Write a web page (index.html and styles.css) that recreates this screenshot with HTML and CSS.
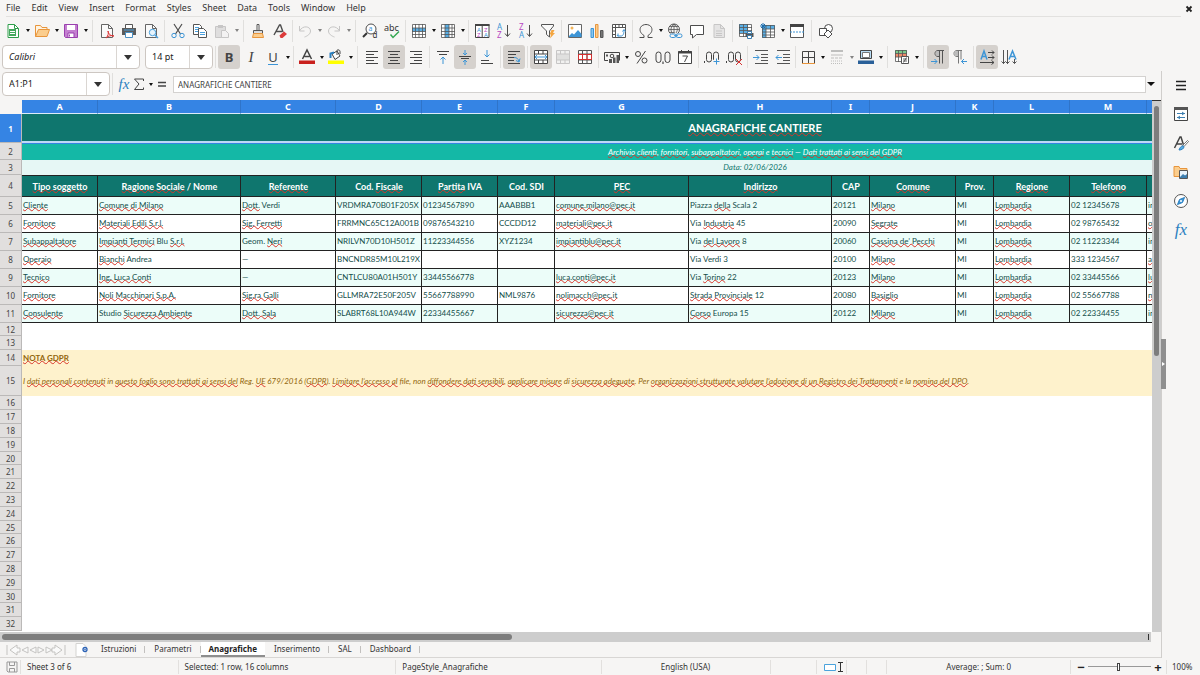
FILE: index.html
```html
<!DOCTYPE html>
<html lang="it">
<head>
<meta charset="utf-8">
<title>Anagrafiche cantiere</title>
<link rel="stylesheet" href="styles.css">
</head>
<body>
<div class="app">
<header class="menubar">
  <nav class="menus">
    <button>File</button><button>Edit</button><button>View</button><button>Insert</button><button>Format</button><button>Styles</button><button>Sheet</button><button>Data</button><button>Tools</button><button>Window</button><button>Help</button>
  </nav>
  <button class="close" aria-label="Close"><svg viewBox="0 0 8 8"><path d="M1.500 1.500l5 5M6.500 1.500l-5 5" stroke="#222" stroke-width="1.800"/></svg></button>
</header>

<div class="toolbar" role="toolbar" aria-label="Standard">
  <button class="tb" aria-label="New"><svg viewBox="0 0 16 16"><path d="M3 1.500h6.500l4 4v9H3z" fill="#fff" stroke="#2e9e4b"/><path d="M9.500 1.500v4h4" stroke="#2e9e4b"/><path d="M4 6h7v7H4z" fill="#43a85c"/><path d="M5 8.500h5M5 10.500h5" stroke="#fff"/></svg></button><button class="arr" aria-label="New options"></button>
  <button class="tb" aria-label="Open"><svg viewBox="0 0 16 16"><path d="M1.500 13.500v-11h5l1.500 2h5v2" fill="#fff3e0" stroke="#e8953c"/><path d="M1.500 13.500l3-7h11l-2.500 7z" fill="#fbcd8d" stroke="#e8953c"/></svg></button><button class="arr" aria-label="Open options"></button>
  <button class="tb" aria-label="Save"><svg viewBox="0 0 16 16"><path d="M1.500 1.500h13v13h-12l-1-1z" fill="#c47fd0" stroke="#9a3fae"/><path d="M4 2h8v5H4z" fill="#fff"/><path d="M5 10h6v4.500H5z" fill="#fff" stroke="#9a3fae"/><path d="M6.500 11.500v2" stroke="#9a3fae"/></svg></button><button class="arr" aria-label="Save options"></button>
  <span class="sep wide"></span>
  <button class="tb" aria-label="Export as PDF"><svg viewBox="0 0 16 16"><path d="M2.500 1.500h7l4 4v9h-11z" fill="#fafafa" stroke="#666"/><path d="M9.500 1.500v4h4" stroke="#666"/><path d="M7 15c2-2 3-5 2-7 0 3 3 5 6 5-3-1-6 0-8 2z" fill="none" stroke="#d33"/></svg></button>
  <button class="tb" aria-label="Print"><svg viewBox="0 0 16 16"><path d="M4.500 5V1.500h7V5" fill="#fff" stroke="#555"/><path d="M1 5h14v7H1z" fill="#5c5c5c"/><path d="M3 7h10" stroke="#4aa0dd"/><path d="M4.500 9.500h7v5h-7z" fill="#fff" stroke="#4a90c4"/></svg></button>
  <button class="tb" aria-label="Print Preview"><svg viewBox="0 0 16 16"><path d="M2.500 1.500h7l4 4v9h-11z" fill="#fafafa" stroke="#666"/><path d="M9.500 1.500v4h4" stroke="#666"/><circle cx="9.500" cy="9.500" r="3.200" fill="#e7f4fd" stroke="#4aa0dd"/><path d="M12 12l3 3" stroke="#4aa0dd" stroke-width="1.500"/></svg></button>
  <span class="sep"></span>
  <button class="tb" aria-label="Cut"><svg viewBox="0 0 16 16"><path d="M4 1l6.500 10M12 1L5.500 11" stroke="#4d4d4d" stroke-width="1.200"/><circle cx="4" cy="12.500" r="2.200" stroke="#3d95d6"/><circle cx="12" cy="12.500" r="2.200" stroke="#3d95d6"/></svg></button>
  <button class="tb" aria-label="Copy"><svg viewBox="0 0 16 16"><path d="M1.500 1.500h6l2 2v8h-8z" fill="#fff" stroke="#555"/><path d="M3 4.500h4M3 6.500h3M3 8.500h3" stroke="#4aa0dd"/><path d="M6.500 5.500h5l3 3v6h-8z" fill="#fff" stroke="#555"/><path d="M8 9.500h5M8 11.500h5" stroke="#4aa0dd"/></svg></button>
  <button class="tb off" aria-label="Paste"><svg viewBox="0 0 16 16"><path d="M1.500 3.500h10v11h-10z" fill="#c9c9c9" stroke="#999"/><path d="M4 2h5v3H4z" fill="#999"/><path d="M7.500 7.500h4l3 3v4h-7z" fill="#f1f1f1" stroke="#999"/></svg></button><button class="arr off" aria-label="Paste options"></button>
  <span class="sep wide"></span>
  <button class="tb" aria-label="Clone Formatting"><svg viewBox="0 0 16 16"><path d="M7 1.500h2v6H7z" fill="#fff" stroke="#555"/><path d="M3.500 7.500h9v3h-9z" fill="#ddd" stroke="#555"/><path d="M3.500 10.500h9l1 4h-11z" fill="#fbcd8d" stroke="#e8953c"/></svg></button>
  <button class="tb" aria-label="Clear Formatting"><svg viewBox="0 0 16 16"><path d="M2 12L7.500 2h1L11 9M4 8.500h6" stroke="#4d4d4d" stroke-width="1.400"/><path d="M7.500 12.500l4.500-4 3 2.500-4.500 4h-2z" fill="#dd3b3b"/></svg></button>
  <span class="sep tight"></span>
  <button class="tb off" aria-label="Undo"><svg viewBox="0 0 16 16"><path d="M2.500 3v5h5M2.500 8c3-6 11-5 11 0 0 3-3 5-6 6" stroke="#999"/></svg></button><button class="arr off" aria-label="Undo history"></button>
  <button class="tb off" aria-label="Redo"><svg viewBox="0 0 16 16"><path d="M13.500 3v5h-5M13.500 8c-3-6-11-5-11 0 0 3 3 5 6 6" stroke="#999"/></svg></button><button class="arr off" aria-label="Redo history"></button>
  <span class="sep wide"></span>
  <button class="tb" aria-label="Find and Replace"><svg viewBox="0 0 16 16"><circle cx="9" cy="6" r="5" fill="#fff" stroke="#4d4d4d"/><path d="M5 10l-4 4" stroke="#333" stroke-width="2"/><text x="6.500" y="8" font-size="7" fill="#3d95d6">a</text><text x="10.500" y="15" font-size="8" fill="#333">d</text></svg></button>
  <button class="tb" aria-label="Spelling"><svg viewBox="0 0 16 16"><text x="0" y="7.500" font-size="9" fill="#333">abc</text><path d="M6.500 11.500l2.500 3 6-6" stroke="#35a853" stroke-width="1.500"/></svg></button>
  <span class="sep"></span>
  <button class="tb" aria-label="Row"><svg viewBox="0 0 16 16"><path d="M1.500 1.500h13v13h-13z" fill="#fff"/><path d="M1 5h14v3.500H1z" fill="#59aee5"/><path d="M1.500 1.500h13v13h-13zM4.500 1v14M8 1v14M11.500 1v14M1 5h14M1 8.500h14M1 11.500h14" stroke="#555" stroke-width=".8"/></svg></button><button class="arr" aria-label="Row options"></button>
  <button class="tb" aria-label="Column"><svg viewBox="0 0 16 16"><path d="M1.500 1.500h13v13h-13z" fill="#fff"/><path d="M5 1h4v14H5z" fill="#59aee5"/><path d="M1.500 1.500h13v13h-13zM5 1v14M9 1v14M12 1v14M1 5h14M1 8.500h14M1 11.500h14" stroke="#555" stroke-width=".8"/></svg></button><button class="arr" aria-label="Column options"></button>
  <span class="sep"></span>
  <button class="tb" aria-label="Sort"><svg viewBox="0 0 16 16"><path d="M1.500 1.500h13.500v13h-13.500zM8.200 3v12" fill="#fff" stroke="#444"/><path d="M1 1h14.500v2H1z" fill="#444"/><text x="3" y="8.500" font-size="6" fill="#3d95d6">A</text><text x="3" y="14" font-size="6" fill="#b847c2">Z</text><text x="10" y="8.500" font-size="6" fill="#b847c2">Z</text><text x="10" y="14" font-size="6" fill="#3d95d6">A</text></svg></button>
  <button class="tb" aria-label="Sort Ascending"><svg viewBox="0 0 16 16"><text x="1" y="7" font-size="8" fill="#3d95d6">A</text><text x="1" y="15" font-size="8" fill="#b847c2">Z</text><path d="M11.500 2v11M9 10.500l2.500 3 2.500-3" stroke="#4d4d4d"/></svg></button>
  <button class="tb" aria-label="Sort Descending"><svg viewBox="0 0 16 16"><text x="1" y="7" font-size="8" fill="#b847c2">Z</text><text x="1" y="15" font-size="8" fill="#3d95d6">A</text><path d="M11.500 2v11M9 10.500l2.500 3 2.500-3" stroke="#4d4d4d"/></svg></button>
  <button class="tb" aria-label="AutoFilter"><svg viewBox="0 0 16 16"><path d="M1.500 1.500h12v1.500L9.500 8v6l-3-2.500V8L1.500 3z" fill="#fafafa" stroke="#555"/><path d="M11.500 7h3l-1.500 3h2l-5 5.500 1-4h-1.500z" fill="#f4a640"/></svg></button>
  <span class="sep"></span>
  <button class="tb" aria-label="Insert Image"><svg viewBox="0 0 16 16"><path d="M1.500 1.500h13v13h-13z" fill="#fff" stroke="#666"/><circle cx="5" cy="5" r="1.500" fill="#f2b45a"/><path d="M2 13l3-3 2 1.500L11 7l3.500 4v3H2z" fill="#3d95d6"/></svg></button>
  <button class="tb" aria-label="Insert Chart"><svg viewBox="0 0 16 16"><path d="M2 5.500h2.500v9H2z" fill="#8ac6ee" stroke="#3d95d6"/><path d="M6.500 1.500H9v13H6.500z" fill="#fbcd8d" stroke="#e8953c"/><path d="M11.500 7.500H14v7h-2.500z" fill="#777" stroke="#555"/></svg></button>
  <button class="tb" aria-label="Pivot Table"><svg viewBox="0 0 16 16"><path d="M1.500 1.500h13v13h-13zM1 4.500h14M4.500 1v14M8 1v3M11.500 1v3M1 8h3M1 11.500h3" fill="#fff" stroke="#555"/><path d="M7 10.500V13h3c2 0 3-2 3-6M11.500 8.500L13 6.500l1.500 2M6 12l1 1.500" stroke="#3d95d6"/></svg></button>
  <span class="sep"></span>
  <button class="tb" aria-label="Special Character"><svg viewBox="0 0 16 16"><path d="M1.500 14.500h4.500v-2C2 10 1.500 7 2.500 4.500c2-4 9-4 11 0 1 2.500.5 5.500-3.500 8v2h4.500" stroke="#4d4d4d"/></svg></button><button class="arr" aria-label="Character options"></button>
  <button class="tb" aria-label="Hyperlink"><svg viewBox="0 0 16 16"><circle cx="7" cy="6.500" r="5.500" stroke="#555"/><path d="M7 1v11M1.500 6.500h11M2.500 3.500h9M2.500 9.500h5M7 1c-4 3-4 8 0 11M7 1c4 3 4 6 2 9" stroke="#555" stroke-width=".8"/><path d="M2.500 10.500h12v5h-12z" fill="#f6f5f4"/><rect x="3" y="11" width="6" height="3.500" rx="1.700" stroke="#3d95d6"/><rect x="9" y="11" width="6" height="3.500" rx="1.700" stroke="#3d95d6"/><path d="M7 12.700h4" stroke="#3d95d6"/></svg></button>
  <button class="tb" aria-label="Comment"><svg viewBox="0 0 16 16"><path d="M1.500 2.500h13v9h-7l-4 3.500v-3.500h-2z" fill="#fff" stroke="#4d4d4d"/></svg></button>
  <button class="tb off" aria-label="Headers and Footers"><svg viewBox="0 0 16 16"><path d="M3 1.500h6.500l4 4v9H3z" fill="#d5d5d5" stroke="#999"/><path d="M9.500 1.500v4h4M5 8h6M5 10.500h6M5 12.500h6" stroke="#999"/></svg></button>
  <span class="sep"></span>
  <button class="tb" aria-label="Print Area"><svg viewBox="0 0 16 16"><path d="M1.500 1.500h12v12h-12z" fill="#fff"/><path d="M1 1h9v9H1z" fill="#59aee5"/><path d="M1.500 1.500h12v12h-12zM5.500 1v13M9.500 1v13M1 4.500h13M1 7.500h13M1 10.500h13" stroke="#555" stroke-width=".8"/><path d="M7.500 10h8v4h-8z" fill="#555"/><path d="M9.500 8.500h4v2h-4zM9.500 12.500h4v3h-4z" fill="#fff" stroke="#3d7fb0"/></svg></button>
  <button class="tb" aria-label="Freeze Rows and Columns"><svg viewBox="0 0 16 16"><path d="M2.500 2.500h12v12h-12z" fill="#fff"/><path d="M2 2h13v4H2zM2 2h4v13H2z" fill="#59aee5"/><path d="M2.500 2.500h12v12h-12zM6 2v13M10.500 2v13M2 6h13M2 9h13M2 12h13" stroke="#555" stroke-width=".8"/><path d="M3 0v6M0 3h6M1 1l4 4M5 1L1 5" stroke="#1c6fb0"/></svg></button><button class="arr" aria-label="Freeze options"></button>
  <button class="tb" aria-label="Split Window"><svg viewBox="0 0 16 16"><path d="M1.500 1.500h13v13h-13z" fill="#fff" stroke="#555"/><path d="M1 1h14v3H1z" fill="#444"/><path d="M1 9h14" stroke="#3d95d6" stroke-dasharray="2 1"/></svg></button>
  <span class="sep wide"></span>
  <button class="tb" aria-label="Show Draw Functions"><svg viewBox="0 0 16 16"><circle cx="10.500" cy="5.500" r="4" fill="#fff" stroke="#4d4d4d"/><path d="M1.500 5.500h7v7h-7z" fill="#fff" stroke="#4d4d4d"/><path d="M10 7l4 4-4 4-4-4z" fill="#fff" stroke="#4d4d4d"/></svg></button>
</div>

<div class="toolbar format" role="toolbar" aria-label="Formatting">
  <div class="combo font-name"><input type="text" aria-label="Font name" value="Calibri"><button aria-label="Font list"></button></div>
  <div class="combo font-size"><input type="text" aria-label="Font size" value="14 pt"><button aria-label="Size list"></button></div>
  <span class="sep"></span>
  <button class="tb on" aria-label="Bold" aria-pressed="true"><b class="glyph">B</b></button>
  <button class="tb" aria-label="Italic"><i class="glyph serif">I</i></button>
  <button class="tb" aria-label="Underline"><span class="glyph under">U</span></button><button class="arr" aria-label="Underline options"></button>
  <span class="sep"></span>
  <button class="tb" aria-label="Font Color"><svg viewBox="0 0 16 16"><path d="M3.500 10L8 1l4.500 9M5.500 7.500h5" stroke="#444" stroke-width="1.500"/><path d="M0 11.500h16V15H0z" fill="#c9211e"/></svg></button><button class="arr" aria-label="Font color options"></button>
  <button class="tb" aria-label="Background Color"><svg viewBox="0 0 16 16"><path d="M4 5l5-3 3 5-5 3.500z" fill="#fff" stroke="#444"/><path d="M9 6V1.500c0-1 3-1 3 1L12 5" stroke="#444"/><path d="M2.500 9V4.500L6 3.500" stroke="#2a7fc0" stroke-width="2"/><path d="M0 11.500h16V15H0z" fill="#ff0"/></svg></button><button class="arr" aria-label="Background options"></button>
  <span class="sep wide"></span>
  <button class="tb" aria-label="Align Left"><svg viewBox="0 0 16 16"><path d="M2 2.500h12M2 5.500h8M2 8.500h12M2 11.500h8M2 14.500h12" stroke="#444"/></svg></button>
  <button class="tb on" aria-label="Center Horizontally" aria-pressed="true"><svg viewBox="0 0 16 16"><path d="M2 2.500h12M4 5.500h8M2 8.500h12M4 11.500h8M2 14.500h12" stroke="#444"/></svg></button>
  <button class="tb" aria-label="Align Right"><svg viewBox="0 0 16 16"><path d="M2 2.500h12M6 5.500h8M2 8.500h12M6 11.500h8M2 14.500h12" stroke="#444"/></svg></button>
  <span class="sep"></span>
  <button class="tb" aria-label="Align Top"><svg viewBox="0 0 16 16"><path d="M2 2.500h12M4 5.500h8" stroke="#444"/><path d="M8 15V8M5.500 10.500L8 8l2.500 2.500" stroke="#3d95d6"/></svg></button>
  <button class="tb on" aria-label="Center Vertically" aria-pressed="true"><svg viewBox="0 0 16 16"><path d="M2 7.500h12M4 9.500h8" stroke="#444"/><path d="M8 1v5M6 4l2 2 2-2M8 16v-5M6 13l2-2 2 2" stroke="#3d95d6"/></svg></button>
  <button class="tb" aria-label="Align Bottom"><svg viewBox="0 0 16 16"><path d="M2 11.500h8M2 14.500h12" stroke="#444"/><path d="M8 1v7M5.500 5.500L8 8l2.500-2.500" stroke="#3d95d6"/></svg></button>
  <span class="sep"></span>
  <button class="tb on" aria-label="Wrap Text" aria-pressed="true"><svg viewBox="0 0 16 16"><path d="M2 2.500h12M2 5.500h8M2 8.500h6M2 11.500h6M2 14.500h12" stroke="#444"/><path d="M8 8.500c3 0 4 1 5 4M10 11.500l3 1.500 1-3.500" stroke="#3d95d6"/></svg></button>
  <span class="sep"></span>
  <button class="tb on" aria-label="Merge and Center Cells" aria-pressed="true"><svg viewBox="0 0 16 16"><path d="M1.500 1.500h13v13h-13zM5.500 1v4M10 1v4M5.500 11v4M10 11v4M1 5h14M1 11h14" fill="#fff" stroke="#444"/><path d="M2 8h12M4 6L2 8l2 2M12 6l2 2-2 2" stroke="#3d95d6"/></svg></button>
  <button class="tb off" aria-label="Merge Cells"><svg viewBox="0 0 16 16"><path d="M1.500 1.500h13v13h-13z" fill="#eee"/><path d="M1 5h14v6H1z" fill="#ccc"/><path d="M1.500 1.500h13v13h-13zM5.500 1v4M10 1v4M5.500 11v4M10 11v4M1 5h14M1 11h14" stroke="#999"/></svg></button>
  <button class="tb" aria-label="Unmerge Cells"><svg viewBox="0 0 16 16"><path d="M1.500 1.500h13v13h-13zM5.500 1v14M10 1v14M1 5h14M1 11h14" fill="#fff" stroke="#555"/><path d="M1.500 5.500h13v5h-13zM5.500 5v6M10 5v6" stroke="#d63030"/></svg></button>
  <span class="sep"></span>
  <button class="tb" aria-label="Format as Currency"><svg viewBox="0 0 16 16"><path d="M.5 3.500h15v8M.5 3.500v8H4" stroke="#444"/><circle cx="8" cy="7" r="1.800" stroke="#444"/><path d="M5 10h3v4H5zM9 8.500h2.500V14H9zM12.500 6H15v8h-2.500z" fill="#555"/><path d="M2 5.500h2v2H2z" fill="#555"/></svg></button><button class="arr" aria-label="Currency options"></button>
  <button class="tb" aria-label="Format as Percent"><svg viewBox="0 0 16 16"><circle cx="5" cy="5" r="2.500" stroke="#444"/><circle cx="11.500" cy="11.500" r="2.500" stroke="#444"/><path d="M12.500 2L4 14.500" stroke="#444"/></svg></button>
  <button class="tb" aria-label="Format as Number"><svg viewBox="0 0 16 16"><rect x="1" y="3" width="5" height="10.500" rx="2.500" stroke="#444"/><rect x="10" y="3" width="5" height="10.500" rx="2.500" stroke="#444"/><path d="M8 12.500V15" stroke="#444" stroke-width="1.200"/></svg></button>
  <button class="tb" aria-label="Format as Date"><svg viewBox="0 0 16 16"><path d="M1.500 2.500h13v12h-13zM4.500 1v2M11.500 1v2" fill="#fff" stroke="#444"/><path d="M1 2.500h14v2H1z" fill="#444"/><path d="M5.500 7h5L7.500 13" stroke="#444"/></svg></button>
  <span class="sep"></span>
  <button class="tb" aria-label="Add Decimal Place"><svg viewBox="0 0 16 16"><path d="M.5 12v2" stroke="#444"/><rect x="2.500" y="3" width="5" height="10" rx="2.500" stroke="#444"/><rect x="9.500" y="3" width="5" height="10" rx="2.500" stroke="#444"/><path d="M12.500 9v7M9 12.500h7" stroke="#f6f5f4" stroke-width="3"/><path d="M12.500 9.500v6M9.500 12.500h6" stroke="#3d95d6"/></svg></button>
  <button class="tb" aria-label="Delete Decimal Place"><svg viewBox="0 0 16 16"><path d="M.5 12v2" stroke="#444"/><rect x="2.500" y="3" width="5" height="10" rx="2.500" stroke="#444"/><rect x="9.500" y="3" width="5" height="10" rx="2.500" stroke="#444"/><path d="M10 10l6 6M16 10l-6 6" stroke="#d63030"/></svg></button>
  <span class="sep"></span>
  <button class="tb" aria-label="Increase Indent"><svg viewBox="0 0 16 16"><path d="M2 1.500h13M8 5.500h7M8 8.500h7M8 11.500h7M2 14.500h13" stroke="#555"/><path d="M0 8.500h6M3.500 6L6 8.500 3.500 11" stroke="#3d95d6"/></svg></button>
  <button class="tb" aria-label="Decrease Indent"><svg viewBox="0 0 16 16"><path d="M2 1.500h13M8 5.500h7M8 8.500h7M8 11.500h7M2 14.500h13" stroke="#555"/><path d="M1 8.500h6M3.500 6L1 8.500 3.500 11" stroke="#3d95d6"/></svg></button>
  <span class="sep tight"></span>
  <button class="tb" aria-label="Borders"><svg viewBox="0 0 16 16"><path d="M2.500 14V2.500h12V14M8.500 2v12M2 8.500h12" fill="none" stroke="#444"/><path d="M2 14.500h13" stroke="#e8953c"/></svg></button><button class="arr" aria-label="Border options"></button>
  <button class="tb off" aria-label="Border Style"><svg viewBox="0 0 16 16"><path d="M2 2h12" stroke="#888" stroke-width="2"/><path d="M2 6h12" stroke="#888"/><path d="M2 9h12" stroke="#888" stroke-dasharray="3 1"/><path d="M2 12h12M2 14.500h12" stroke="#888" stroke-dasharray="1 1"/></svg></button><button class="arr off" aria-label="Border style options"></button>
  <button class="tb" aria-label="Border Color"><svg viewBox="0 0 16 16"><path d="M2.500 1.500h11v8h-11z" fill="#b9ddf5" stroke="#444"/><path d="M4.500 3.500h7v5h-7z" fill="#fff" stroke="#777"/><path d="M0 11.500h16V15H0z" fill="#2a6099"/></svg></button><button class="arr" aria-label="Border color options"></button>
  <span class="sep wide"></span>
  <button class="tb" aria-label="Conditional Formatting"><svg viewBox="0 0 16 16"><path d="M1.500 1.500h11v11h-11z" fill="#fff"/><path d="M1 1h12v3.500H1z" fill="#7bcb8c"/><path d="M1 4.500h12V8H1z" fill="#ee8a6a"/><path d="M1.500 1.500h11v11h-11zM4.500 1v12M8.500 1v12M1 4.500h12M1 8h12" stroke="#555" stroke-width=".8"/><path d="M7.500 7.500h7v7h-7z" fill="#fff" stroke="#555"/><path d="M9 10h4M9 12h4M12.500 8.500l-3 5" stroke="#444" stroke-width=".8"/></svg></button><button class="arr" aria-label="Conditional options"></button>
  <span class="sep wide"></span>
  <button class="tb on" aria-label="Left-To-Right" aria-pressed="true"><svg viewBox="0 0 16 16"><path d="M14 1.500H8c-4 0-4 6 0 6h1M9.500 1.500v13M12.500 1.500v13" stroke="#555"/><path d="M9 2H8C5 2 5 7 8 7h1z" fill="#bbb"/><path d="M1 12.500h6M4.500 10L7 12.500 4.500 15" stroke="#3d95d6"/></svg></button>
  <button class="tb" aria-label="Right-To-Left"><svg viewBox="0 0 16 16"><path d="M10 1.500H5c-4 0-4 6 0 6h1M6.500 1.500v13M9 1.500v9" stroke="#777"/><path d="M6 2H5C2 2 2 7 5 7h1z" fill="#bbb"/><path d="M15 12.500H9.500M12 10l-2.500 2.500L12 15" stroke="#3d95d6"/></svg></button>
  <span class="sep"></span>
  <button class="tb on" aria-label="Text direction left to right" aria-pressed="true"><svg viewBox="0 0 16 16"><path d="M2 10.500L5 2l3 8.500M3 7.500h4" stroke="#3d95d6" stroke-width="1.500"/><path d="M9 3.500h6M13 1.500l2 2-2 2M9 8.500h6M13 6.500l2 2-2 2M1 13.500h14M12.500 11.500l2.500 2-2.500 2" stroke="#444"/></svg></button>
  <button class="tb" aria-label="Text direction top to bottom"><svg viewBox="0 0 16 16"><path d="M8 10.500L11.500 2 15 10.500M9 7.500h5" stroke="#3d95d6" stroke-width="1.500"/><path d="M2.500 1v14M.5 12.500l2 2 2-2M6.500 1v14M4.500 12.500l2 2 2-2M13.500 10v4.500M11.500 12.500l2 2 2-2" stroke="#555"/></svg></button>
</div>

<div class="main">
  <main class="work">
    <div class="formula">
      <div class="combo name-box"><input type="text" aria-label="Name Box" value="A1:P1"><button aria-label="Named ranges"></button></div>
      <span class="sep"></span>
      <button class="fb fx" aria-label="Function Wizard">fx</button>
      <button class="fb" aria-label="Select Function"><svg viewBox="0 0 12 14"><path d="M10.500 4V2h-9l4.500 5-4.500 5.500h9v-2" fill="none" stroke="#444"/></svg></button>
      <button class="arr" aria-label="Sum options"></button>
      <button class="fb" aria-label="Formula"><svg viewBox="0 0 12 14"><path d="M2 5.500h8M2 9h8" stroke="#444" stroke-width="1.500"/></svg></button>
      <input class="line" type="text" aria-label="Input line" value="ANAGRAFICHE CANTIERE">
      <button class="arr" aria-label="Expand formula bar"></button>
    </div>

    <div class="sheet">
      <div class="clip">
      <table>
        <colgroup><col class="c22"><col class="c76"><col class="c143"><col class="c95"><col class="c86"><col class="c76"><col class="c57"><col class="c134"><col class="c143"><col class="c38"><col class="c86"><col class="c38"><col class="c76"><col class="c77"><col class="c143"><col class="c100"><col class="c100"></colgroup>
        <thead><tr><th class="corner"></th><th>A</th><th>B</th><th>C</th><th>D</th><th>E</th><th>F</th><th>G</th><th>H</th><th>I</th><th>J</th><th>K</th><th>L</th><th>M</th><th></th><th></th><th></th></tr></thead>
        <tbody class="intro">
          <tr class="title"><th>1</th><td colspan="16"><u>ANAGRAFICHE</u> <u>CANTIERE</u></td></tr>
          <tr class="subtitle"><th>2</th><td colspan="16"><u>Archivio clienti</u>, <u>fornitori</u>, <u>subappaltatori</u>, <u>operai</u> e <u>tecnici</u> — <u>Dati trattati ai sensi del GDPR</u></td></tr>
          <tr class="date"><th>3</th><td colspan="16">Data: 02/06/2026</td></tr>
        </tbody>
        <tbody class="data">
          <tr class="heads"><th>4</th><td><u>Tipo soggetto</u></td><td><u>Ragione Sociale</u> / Nome</td><td><u>Referente</u></td><td>Cod. <u>Fiscale</u></td><td><u>Partita</u> IVA</td><td>Cod. SDI</td><td><u>PEC</u></td><td><u>Indirizzo</u></td><td>CAP</td><td><u>Comune</u></td><td>Prov.</td><td><u>Regione</u></td><td><u>Telefono</u></td><td></td><td></td><td></td></tr>
          <tr><th>5</th><td><u>Cliente</u></td><td><u>Comune di Milano</u></td><td><u>Dott.</u> Verdi</td><td>VRDMRA70B01F205X</td><td>01234567890</td><td>AAABBB1</td><td><u>comune.milano@pec.it</u></td><td>Piazza <u>della</u> Scala 2</td><td>20121</td><td><u>Milano</u></td><td>MI</td><td><u>Lombardia</u></td><td>02 12345678</td><td>in</td><td></td><td></td></tr>
          <tr><th>6</th><td><u>Fornitore</u></td><td><u>Materiali Edili S.r.l.</u></td><td><u>Sig. Ferretti</u></td><td>FRRMNC65C12A001B</td><td>09876543210</td><td>CCCDD12</td><td><u>materiali@pec.it</u></td><td>Via <u>Industria</u> 45</td><td>20090</td><td><u>Segrate</u></td><td>MI</td><td><u>Lombardia</u></td><td>02 98765432</td><td><u>o</u></td><td></td><td></td></tr>
          <tr><th>7</th><td><u>Subappaltatore</u></td><td><u>Impianti Termici</u> Blu <u>S.r.l.</u></td><td>Geom. <u>Neri</u></td><td>NRILVN70D10H501Z</td><td>11223344556</td><td>XYZ1234</td><td><u>impiantiblu@pec.it</u></td><td>Via <u>del Lavoro</u> 8</td><td>20060</td><td><u>Cassina de’ Pecchi</u></td><td>MI</td><td><u>Lombardia</u></td><td>02 11223344</td><td>in</td><td></td><td></td></tr>
          <tr><th>8</th><td><u>Operaio</u></td><td><u>Bianchi</u> Andrea</td><td>—</td><td>BNCNDR85M10L219X</td><td></td><td></td><td></td><td>Via Verdi 3</td><td>20100</td><td><u>Milano</u></td><td>MI</td><td><u>Lombardia</u></td><td>333 1234567</td><td><u>a</u></td><td></td><td></td></tr>
          <tr><th>9</th><td><u>Tecnico</u></td><td><u>Ing. Luca Conti</u></td><td>—</td><td>CNTLCU80A01H501Y</td><td>33445566778</td><td></td><td><u>luca.conti@pec.it</u></td><td>Via <u>Torino</u> 22</td><td>20123</td><td><u>Milano</u></td><td>MI</td><td><u>Lombardia</u></td><td>02 33445566</td><td><u>lu</u></td><td></td><td></td></tr>
          <tr><th>10</th><td><u>Fornitore</u></td><td><u>Noli Macchinari S.p.A.</u></td><td><u>Sig.ra Galli</u></td><td>GLLMRA72E50F205V</td><td>55667788990</td><td>NML9876</td><td><u>nolimacch@pec.it</u></td><td><u>Strada Provinciale</u> 12</td><td>20080</td><td><u>Basiglio</u></td><td>MI</td><td><u>Lombardia</u></td><td>02 55667788</td><td><u>n</u></td><td></td><td></td></tr>
          <tr><th>11</th><td><u>Consulente</u></td><td>Studio <u>Sicurezza Ambiente</u></td><td><u>Dott. Sala</u></td><td>SLABRT68L10A944W</td><td>22334455667</td><td></td><td><u>sicurezza@pec.it</u></td><td><u>Corso</u> Europa 15</td><td>20122</td><td><u>Milano</u></td><td>MI</td><td><u>Lombardia</u></td><td>02 22334455</td><td>in</td><td></td><td></td></tr>
        </tbody>
        <tbody class="notes">
          <tr class="short"><th>12</th><td colspan="16"></td></tr>
          <tr><th>13</th><td colspan="16"></td></tr>
          <tr class="note-head"><th>14</th><td colspan="16"><u>NOTA GDPR</u></td></tr>
          <tr class="note"><th>15</th><td colspan="16">I <u>dati personali contenuti</u> in <u>questo foglio sono trattati ai sensi del</u> Reg. <u>UE</u> 679/2016 (<u>GDPR</u>). <u>Limitare l’accesso al</u> file, non <u>diffondere dati sensibili</u>, <u>applicare misure</u> di <u>sicurezza adeguate</u>. Per <u>organizzazioni strutturate valutare l’adozione di un Registro dei Trattamenti</u> e la <u>nomina del DPO</u>.</td></tr>
        </tbody>
        <tbody class="blank">
          <tr><th>16</th><td colspan="16"></td></tr><tr><th>17</th><td colspan="16"></td></tr><tr><th>18</th><td colspan="16"></td></tr><tr><th>19</th><td colspan="16"></td></tr><tr><th>20</th><td colspan="16"></td></tr><tr><th>21</th><td colspan="16"></td></tr><tr><th>22</th><td colspan="16"></td></tr><tr><th>23</th><td colspan="16"></td></tr><tr><th>24</th><td colspan="16"></td></tr><tr><th>25</th><td colspan="16"></td></tr><tr><th>26</th><td colspan="16"></td></tr><tr><th>27</th><td colspan="16"></td></tr><tr><th>28</th><td colspan="16"></td></tr><tr><th>29</th><td colspan="16"></td></tr><tr><th>30</th><td colspan="16"></td></tr><tr><th>31</th><td colspan="16"></td></tr><tr><th>32</th><td colspan="16"></td></tr>
        </tbody>
      </table>
      </div>
      <div class="vscroll"><span class="thumb"></span></div>
    </div>
    <div class="hscroll"><div class="track"><span class="thumb"></span><span class="mark"></span></div></div>
    <div class="tabs">
      <button class="nav" aria-label="Scroll sheets"><svg viewBox="0 0 60 12"><path d="M1 1v10M11 1L4 6l7 5V8h3V4h-3zM22 3l-6 3 6 3zM30 3l-6 3 6 3zM32 3l6 3-6 3zM40 3l6 3-6 3zM49 1l7 5-7 5V8h-3V4h3zM59 1v10" fill="#fafafa" stroke="#c4c3c1"/></svg></button>
      <button class="add" aria-label="Add Sheet"><svg viewBox="0 0 12 14"><path d="M1 .5h7l3 3v10H1z" fill="#fff" stroke="#d4d3d1"/><circle cx="10" cy="6.500" r="2" fill="#fff" stroke="#2b62b5" stroke-width="1.300"/><path d="M10 5.500v2M9 6.500h2" stroke="#2b62b5" stroke-width=".6"/></svg></button>
      <button class="tab">Istruzioni</button><button class="tab">Parametri</button><button class="tab active">Anagrafiche</button><button class="tab">Inserimento</button><button class="tab">SAL</button><button class="tab">Dashboard</button>
    </div>
  </main>
  <aside class="sidebar">
    <span class="grip"></span>
    <button aria-label="Sidebar Settings"><svg viewBox="0 0 16 16"><path d="M3 4.500h10M3 8.500h10M3 12.500h10" stroke="#222" stroke-width="1.500"/></svg></button>
    <button aria-label="Properties"><svg viewBox="0 0 16 16"><path d="M1.500 1.500h13v13h-13z" fill="#fff" stroke="#444"/><path d="M1 1h14v3H1z" fill="#555"/><path d="M4 7.500h8M4 11.500h8M9 6l2 1.500L9 9M7 10l-2 1.500L7 13" stroke="#3d7fb0"/></svg></button>
    <button aria-label="Styles"><svg viewBox="0 0 16 16"><path d="M1.500 13L7 2h1l2.500 8M4 9h5" stroke="#444" stroke-width="1.500"/><path d="M14.500 5.500l1 1-4.500 5-1.500-1z" fill="#fff" stroke="#555" stroke-width=".8"/><path d="M6 15c1-3 3-5 5-3.500 0 2-2 3.500-5 3.500z" fill="#59aee5" stroke="#2a7fc0"/></svg></button>
    <button aria-label="Gallery"><svg viewBox="0 0 16 16"><path d="M1 12.500v-10h5l1 2h7v8z" fill="#fbcd8d" stroke="#e8953c"/><path d="M6.500 6.500h8v8h-8z" fill="#e9f4fc" stroke="#555"/><path d="M7 13l3-3 2 1.500 2-1.500v4H7z" fill="#3d7fb0"/></svg></button>
    <button aria-label="Navigator"><svg viewBox="0 0 16 16"><circle cx="8" cy="8" r="6.500" fill="#fff" stroke="#555"/><path d="M11.500 4.500L9.500 9.500l-5 2 2-5z" fill="#3d95d6" stroke="#2a7fc0"/><circle cx="8" cy="8" r="1" fill="#fff"/></svg></button>
    <button class="fx" aria-label="Functions">fx</button>
  </aside>
</div>

<footer class="status">
  <span class="cell s-save"><svg viewBox="0 0 12 12"><path d="M1 1h10v10H2l-1-1zM3.500 1v3.500h5V1M3.500 11V7.500h5V11" fill="none" stroke="#999"/></svg></span>
  <span class="cell s-sheet">Sheet 3 of 6</span>
  <span class="cell s-sel">Selected: 1 row, 16 columns</span>
  <span class="cell s-style">PageStyle_Anagrafiche</span>
  <span class="cell s-lang">English (USA)</span>
  <span class="cell s-gap"></span>
  <span class="cell s-mode"><svg viewBox="0 0 20 12"><path d="M1.500 3.500h11v6h-11z" fill="#fff" stroke="#4ba3dc"/><path d="M15 1.500h5M15 10.500h5M17.500 1.500v9" stroke="#333"/></svg></span>
  <span class="cell s-small"></span>
  <span class="cell s-small"></span>
  <span class="cell s-sum">Average: ; Sum: 0</span>
  <span class="cell s-zoom"><button aria-label="Zoom out">−</button><input type="range" aria-label="Zoom" min="0" max="100" value="48"><button aria-label="Zoom in">+</button></span>
  <span class="cell s-pct">100%</span>
</footer>
</div>
</body>
</html>
```
FILE: styles.css
```css
* { box-sizing: border-box; }
html, body { height: 100%; }
body {
  margin: 0;
  background: #f6f5f4;
  color: #333;
  font: 9px/12px "Noto Sans", sans-serif;
  overflow: hidden;
}
button, input {
  margin: 0;
  padding: 0;
  border: 0;
  background: none;
  color: inherit;
  font: inherit;
}
svg { display: block; fill: none; overflow: visible; }
svg text { font-family: "Noto Sans", sans-serif; }
.app { display: flex; flex-direction: column; height: 100vh; }

/* menu bar */
.menubar {
  display: flex;
  align-items: center;
  justify-content: space-between;
  height: 17px;
  flex: none;
  padding: 0 7px 0 6px;
}
.menus { display: flex; gap: 11px; flex: 1; margin-right: 4px; border-bottom: 1px solid #e2e1df; height: 17px; }
.close svg { width: 8px; height: 8px; }

/* toolbars */
.toolbar { display: flex; align-items: center; height: 27px; flex: none; padding-left: 2px; }
.format { padding-bottom: 1px; }
.tb {
  display: flex;
  align-items: center;
  justify-content: center;
  width: 22px;
  height: 24px;
  border-radius: 3px;
  flex: none;
}
.tb svg { width: 16px; height: 16px; }
.tb.on { background: #d5d1cd; }
.off { opacity: .5; }
.arr { position: relative; width: 7px; height: 22px; flex: none; }
.arr::before, .combo button::before {
  content: "";
  display: block;
  width: 0;
  margin: 0 auto;
  border: solid transparent;
  border-width: 3px 2px 0;
  border-top-color: #111;
}
.sep { width: 5px; height: 22px; flex: none; background: linear-gradient(#e0dfdd, #e0dfdd) center / 1px 100% no-repeat; }
.sep.wide { width: 7px; }
.sep.tight { width: 3px; }
.glyph { color: #444; font-size: 13px; line-height: 18px; }
.glyph.serif { font-family: "Liberation Serif", serif; font-size: 15px; }
.glyph.under { line-height: 14px; border-bottom: 1px solid #3d95d6; }

.combo {
  display: flex;
  height: 24px;
  background: #fff;
  border: 1px solid #cdc7c2;
  border-radius: 4px;
  flex: none;
}
.combo input { flex: 1; min-width: 0; padding-left: 6px; color: #222; }
.combo button { width: 23px; border-left: 1px solid #dad6d2; }
.combo button::before { border-width: 5px 4px 0; border-top-color: #333; }
.font-name { width: 138px; margin-right: 5px; font-style: italic; }
.font-size { width: 68px; }

/* formula bar */
.main { display: flex; flex: 1; min-height: 0; }
.work { display: flex; flex-direction: column; flex: 1; min-width: 0; }
.formula { display: flex; align-items: center; height: 29px; flex: none; padding: 0 5px 3px 2px; font-size: 8px; }
.name-box { width: 108px; font-size: 9px; }
.fb { width: 13px; flex: none; }
.fb svg { width: 12px; height: 14px; }
.fx { color: #2a7fc0; font: italic 15px/18px "Liberation Serif", serif; }
.fb.fx { width: 18px; }
.formula .arr { width: 10px; }
.formula .line {
  flex: 1;
  min-width: 0;
  height: 17px;
  margin-left: 4px;
  padding-left: 4px;
  background: #fff;
  border: 1px solid #d4d2d0;
  color: #444;
}
.formula .line + .arr::before { border-width: 4px 4px 0; }

/* grid */
.sheet { display: flex; flex: 1; min-height: 0; }
.clip { flex: 1; min-width: 0; overflow: hidden; background: #fff; }
table { width: 1488px; table-layout: fixed; border-collapse: separate; border-spacing: 0; }
.c22 { width: 22px; } .c38 { width: 38px; } .c57 { width: 57px; } .c76 { width: 76px; }
.c77 { width: 77px; } .c86 { width: 86px; } .c95 { width: 95px; } .c100 { width: 99px; }
.c134 { width: 134px; } .c143 { width: 143px; }
th, td { padding: 0; white-space: nowrap; overflow: hidden; line-height: 11px; }
tbody th {
  background: #e1dfde;
  border-right: 1px solid #bbb9b8;
  border-bottom: 1px solid #bbb9b8;
  color: #444;
  font-size: 8px;
  font-weight: 400;
}
td { font-family: Lato, sans-serif; font-size: 8px; text-align: left; }
thead tr { height: 14px; }
thead th { background: #3584e4; color: #fff; font-size: 9px; border-right: 1px solid #2f74c9; border-bottom: 1px solid #dcebfb; }
thead .corner { background: #f6f5f4; border-color: #f6f5f4; }
u { text-decoration: underline wavy #d8352a 1px; text-decoration-skip-ink: none; text-underline-offset: -1px; }

.intro td { text-align: center; color: #fff; }
.title { height: 29px; }
.title th { background: #3584e4; color: #fff; font-weight: 700; }
.title td {
  background: #0f766e;
  font-size: 11px;
  line-height: 15px;
  font-weight: 700;
  border-bottom: 2px solid #bdd9f8;
}
.title u { text-underline-offset: 0; }
.subtitle { height: 17px; }
.subtitle td { background: #14b8a6; font-style: italic; border-top: 1px solid #3584e4; }
.date { height: 15px; }
.date td { background: #e6f7f5; color: #0f766e; font-style: italic; }

.data tr { height: 18px; }
.data td { padding-left: 1px; color: #134e4a; border-right: 1px solid #222; border-bottom: 1px solid #222; }
.data tr:nth-child(even) td { background: #ecfdf9; }
.data .heads { height: 22px; }
.data .heads td { background: #0f766e; color: #fff; font-size: 9px; font-weight: 700; text-align: center; border-top: 1px solid #222; }

.notes tr, .blank tr { height: 14px; }
.notes .short { height: 13px; }
.notes .note-head { height: 16px; }
.notes .note { height: 30px; }
.note-head td, .note td { padding-left: 1px; background: #fef2cc; color: #92660c; }
.note-head td { font-weight: 700; }
.note td { font-style: italic; }
.blank tr:nth-child(5n) { height: 13px; }

/* scroll bars */
.vscroll { width: 9px; flex: none; padding: 5px 2px; background: #cdcdcd; border-top: 1px solid #333; }
.vscroll .thumb { display: block; height: 48%; background: #7d7d7d; border-radius: 3px; }
.hscroll { height: 10px; flex: none; padding-right: 10px; }
.track { display: flex; justify-content: space-between; height: 10px; padding: 2px; background: #cdcdcd; }
.hscroll .thumb { width: 44.5%; background: #7d7d7d; border-radius: 3px; }
.mark { width: 1px; background: #333; }

/* sheet tabs */
.tabs { display: flex; height: 16px; flex: none; padding-left: 6px; font-size: 8px; border-bottom: 1px solid #d8d6d4; }
.nav { width: 60px; }
.nav svg { width: 60px; height: 12px; }
.add { width: 26px; padding-left: 8px; }
.add svg { width: 14px; height: 14px; }
.tab { position: relative; padding: 0 9px 2px; }
.tab::after { content: ""; position: absolute; right: 0; top: 4px; height: 7px; border-right: 1px solid #c2c0be; }
.tab.active { padding: 0 8px; background: #fff; color: #222; font-weight: 700; border-bottom: 2px solid #8e8e8e; }
.tab.active::after { display: none; }

/* sidebar */
.sidebar {
  position: relative;
  display: flex;
  flex-direction: column;
  align-items: center;
  width: 39px;
  flex: none;
  padding-top: 4px;
  border-left: 1px solid #d0cecc;
}
.sidebar button { width: 24px; height: 29px; display: flex; align-items: center; justify-content: center; padding-bottom: 10px; }
.sidebar button svg { width: 16px; height: 16px; flex: none; }
.sidebar .fx { font-size: 17px; }
.grip { position: absolute; left: -1px; top: 268px; width: 5px; height: 50px; background: #8f8f8f; }
.grip::after { content: ""; position: absolute; left: 1px; top: 23px; border: solid transparent; border-width: 2px 0 2px 3px; border-left-color: #fff; }

/* status bar */
.status { display: flex; align-items: center; height: 17px; flex: none; font-size: 8px; }
.cell { display: flex; align-items: center; height: 14px; padding-left: 6px; border-right: 1px solid #e2e0de; }
.s-save { width: 21px; }
.s-save svg { width: 12px; height: 12px; }
.s-sheet { flex: 155 1 0; }
.s-sel { flex: 217 1 0; }
.s-style { flex: 204 1 0; }
.s-lang { flex: 173 1 0; justify-content: center; padding: 0; }
.s-gap { flex: 41 1 0; }
.s-mode { width: 30px; }
.s-mode svg { width: 20px; height: 12px; flex: none; }
.s-small { width: 20px; }
.s-sum { flex: 188 1 0; justify-content: center; padding: 0; }
.s-zoom { width: 96px; gap: 2px; padding: 0 3px 0 5px; }
.s-zoom button { width: 10px; font-size: 13px; font-weight: 700; color: #222; }
.s-zoom input { appearance: none; flex: 1; min-width: 0; height: 10px; background: linear-gradient(#999, #999) center / 100% 1px no-repeat; }
.s-zoom input::-webkit-slider-thumb { appearance: none; width: 3px; height: 8px; background: #fff; border: 1px solid #444; }
.s-pct { width: 33px; padding-left: 5px; border: 0; }
```
